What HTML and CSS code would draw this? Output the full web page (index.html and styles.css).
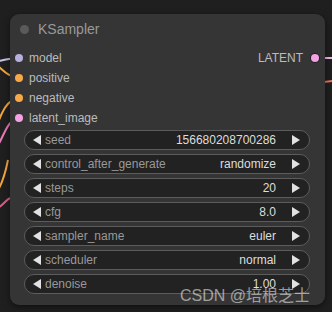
FILE: index.html
```html
<!DOCTYPE html>
<html lang="en">
<head>
    <meta charset="UTF-8">
    <title>KSampler</title>
    <link rel="stylesheet" href="styles.css">
</head>
<body>
<div class="canvas">
    <svg class="wires" width="332" height="312" viewBox="0 0 332 312">
        <path d="M-5 62 C4 60 10 58 19 58" stroke="#c8c0e8" stroke-width="2" fill="none"/>
        <path d="M-5 64 C4 70 6 76 19 78" stroke="#f0a540" stroke-width="2" fill="none"/>
        <path d="M-5 130 C2 112 6 100 19 98" stroke="#f0a540" stroke-width="2" fill="none"/>
        <path d="M-5 150 C4 138 6 120 19 118" stroke="#e87ab8" stroke-width="2" fill="none"/>
        <path d="M-2 190 C4 180 6 170 8 160" stroke="#f0a540" stroke-width="2" fill="none"/>
        <path d="M-2 208 C4 204 6 200 10 198" stroke="#e05a8a" stroke-width="2" fill="none"/>
        <path d="M324 58 L340 58" stroke="#f0b4e6" stroke-width="2" fill="none"/>
        <path d="M324 82 L340 80" stroke="#e8705a" stroke-width="2" fill="none"/>
    </svg>
    <div class="node">
        <div class="title">
            <span class="dot"></span>
            <span>KSampler</span>
        </div>
        <div class="slots">
            <div class="inputs">
                <div class="slot"><i class="pin model"></i>model</div>
                <div class="slot"><i class="pin cond"></i>positive</div>
                <div class="slot"><i class="pin cond"></i>negative</div>
                <div class="slot"><i class="pin latent"></i>latent_image</div>
            </div>
            <div class="outputs">
                <div class="slot">LATENT<i class="pin latent out"></i></div>
            </div>
        </div>
        <div class="widgets">
            <div class="widget"><b class="arr l"></b><span class="name">seed</span><span class="val">156680208700286</span><b class="arr r"></b></div>
            <div class="widget"><b class="arr l"></b><span class="name">control_after_generate</span><span class="val">randomize</span><b class="arr r"></b></div>
            <div class="widget"><b class="arr l"></b><span class="name">steps</span><span class="val">20</span><b class="arr r"></b></div>
            <div class="widget"><b class="arr l"></b><span class="name">cfg</span><span class="val">8.0</span><b class="arr r"></b></div>
            <div class="widget"><b class="arr l"></b><span class="name">sampler_name</span><span class="val">euler</span><b class="arr r"></b></div>
            <div class="widget"><b class="arr l"></b><span class="name">scheduler</span><span class="val">normal</span><b class="arr r"></b></div>
            <div class="widget"><b class="arr l"></b><span class="name">denoise</span><span class="val">1.00</span><b class="arr r"></b></div>
        </div>
    </div>
    <div class="mark">CSDN @培根芝士</div>
</div>
</body>
</html>
```

FILE: styles.css
```css
*{
    padding: 0;
    margin: 0;
    box-sizing: border-box;
}
body{
    background: #1f1f1f;
    font-family: "Liberation Sans", Arial, "Noto Sans CJK SC", sans-serif;
}
.canvas{
    width: 332px;
    height: 312px;
    position: relative;
    overflow: hidden;
    background: #1f1f1f;
}
.wires{
    position: absolute;
    left: 0;
    top: 0;
}
.node{
    position: absolute;
    left: 10px;
    top: 14px;
    width: 315px;
    height: 291px;
    background: #353535;
    border-radius: 9px;
    box-shadow: 0 2px 6px rgba(0,0,0,0.5);
    display: flex;
    flex-direction: column;
}
.title{
    height: 30px;
    display: flex;
    align-items: center;
    gap: 9px;
    padding-left: 10px;
    color: #999;
    font-size: 14px;
}
.title .dot{
    width: 9px;
    height: 9px;
    border-radius: 50%;
    background: #5a5a5a;
}
.slots{
    display: flex;
    justify-content: space-between;
    padding-top: 4px;
}
.slot{
    height: 20px;
    display: flex;
    align-items: center;
    gap: 6px;
    font-size: 12px;
    color: #bbb;
}
.inputs .slot{
    padding-left: 5px;
}
.outputs .slot{
    padding-right: 6px;
    gap: 8px;
}
.pin{
    width: 8px;
    height: 8px;
    border-radius: 50%;
    display: block;
}
.pin.model{ background: #b7b0dc; }
.pin.cond{ background: #f7a94a; }
.pin.latent{ background: #f3a2e3; }
.pin.out{ box-shadow: 0 0 0 1px #222; }
.widgets{
    display: flex;
    flex-direction: column;
    gap: 4px;
    padding: 2px 15px 0 14px;
}
.widget{
    height: 20px;
    border: 1px solid #5c5c5c;
    border-radius: 10px;
    background: #222;
    display: flex;
    align-items: center;
    font-size: 12px;
    padding: 0 9px 0 8px;
}
.widget .name{
    color: #999;
    margin-left: 4px;
    flex-grow: 1;
}
.widget .val{
    color: #ddd;
    margin-right: 16px;
}
.arr{
    width: 0;
    height: 0;
    border-top: 5px solid transparent;
    border-bottom: 5px solid transparent;
}
.arr.l{ border-right: 8px solid #e2e2e2; }
.arr.r{ border-left: 8px solid #e2e2e2; }
.mark{
    position: absolute;
    left: 180px;
    top: 282px;
    font-size: 16px;
    color: rgba(255,255,255,0.55);
}
```
